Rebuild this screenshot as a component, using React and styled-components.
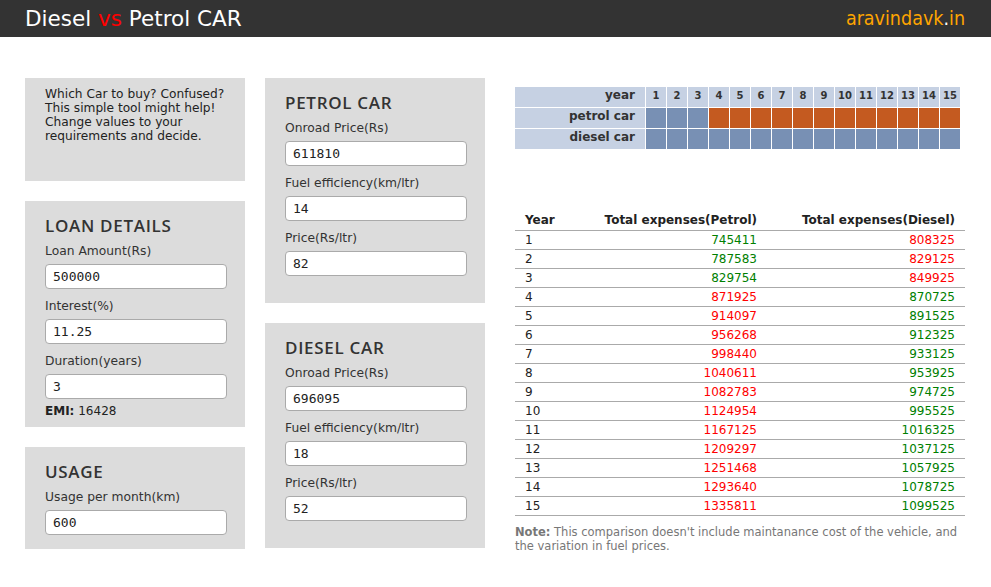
import React from "react";
import styled, { createGlobalStyle } from "styled-components";

const GlobalStyle = createGlobalStyle`
  body {
    margin: 0;
    background: #fff;
    font-family: "DejaVu Sans", Verdana, sans-serif;
    color: #333;
  }
  * {
    box-sizing: border-box;
  }
`;

const petrolTotals = [745411, 787583, 829754, 871925, 914097, 956268, 998440, 1040611, 1082783, 1124954, 1167125, 1209297, 1251468, 1293640, 1335811];
const dieselTotals = [808325, 829125, 849925, 870725, 891525, 912325, 933125, 953925, 974725, 995525, 1016325, 1037125, 1057925, 1078725, 1099525];

const years = petrolTotals.map((_, i) => i + 1);

const App = () => {
  return (
    <React.Fragment>
      <GlobalStyle />
      <Header>
        <Title>
          Diesel <Vs>vs</Vs> Petrol CAR
        </Title>
        <Site>
          aravindavk<Dot>.</Dot>in
        </Site>
      </Header>
      <Main>
        <Column>
          <Box height={103} intro>
            <Intro>
              Which Car to buy? Confused?
              <br />
              This simple tool might help!
              <br />
              Change values to your
              <br />
              requirements and decide.
            </Intro>
          </Box>
          <Box height={226}>
            <Heading>LOAN DETAILS</Heading>
            <Label>Loan Amount(Rs)</Label>
            <Input defaultValue="500000" />
            <Label>Interest(%)</Label>
            <Input defaultValue="11.25" />
            <Label>Duration(years)</Label>
            <Input defaultValue="3" />
            <Emi>
              <b>EMI:</b> 16428
            </Emi>
          </Box>
          <Box height={102}>
            <Heading>USAGE</Heading>
            <Label>Usage per month(km)</Label>
            <Input defaultValue="600" />
          </Box>
        </Column>
        <Column>
          <Box height={225}>
            <Heading>PETROL CAR</Heading>
            <Label>Onroad Price(Rs)</Label>
            <Input defaultValue="611810" />
            <Label>Fuel efficiency(km/ltr)</Label>
            <Input defaultValue="14" />
            <Label>Price(Rs/ltr)</Label>
            <Input defaultValue="82" />
          </Box>
          <Box height={225}>
            <Heading>DIESEL CAR</Heading>
            <Label>Onroad Price(Rs)</Label>
            <Input defaultValue="696095" />
            <Label>Fuel efficiency(km/ltr)</Label>
            <Input defaultValue="18" />
            <Label>Price(Rs/ltr)</Label>
            <Input defaultValue="52" />
          </Box>
        </Column>
        <Results>
          <Strip>
            <StripLabel>year</StripLabel>
            {years.map((y) => (
              <StripYear key={"y" + y}>{y}</StripYear>
            ))}
            <StripLabel>petrol car</StripLabel>
            {years.map((y) => (
              <StripCell key={"p" + y} hot={petrolTotals[y - 1] > dieselTotals[y - 1]} />
            ))}
            <StripLabel>diesel car</StripLabel>
            {years.map((y) => (
              <StripCell key={"d" + y} />
            ))}
          </Strip>
          <Expenses>
            <colgroup>
              <col width="70" />
              <col width="182" />
              <col width="198" />
            </colgroup>
            <thead>
              <tr>
                <Th>Year</Th>
                <Th right>Total expenses(Petrol)</Th>
                <Th right>Total expenses(Diesel)</Th>
              </tr>
            </thead>
            <tbody>
              {years.map((y) => {
                const p = petrolTotals[y - 1];
                const d = dieselTotals[y - 1];
                return (
                  <tr key={y}>
                    <Td>{y}</Td>
                    <Td right cheaper={p < d}>{p}</Td>
                    <Td right cheaper={d < p}>{d}</Td>
                  </tr>
                );
              })}
            </tbody>
          </Expenses>
          <Note>
            <b>Note:</b> This comparison doesn't include maintanance cost of the vehicle, and the variation in fuel prices.
          </Note>
        </Results>
      </Main>
    </React.Fragment>
  );
};

const Header = styled.header`
  height: 37px;
  background-color: #333;
  display: flex;
  align-items: center;
  justify-content: space-between;
  padding: 0 26px 0 25px;
`;

const Title = styled.h1`
  margin: 0;
  font-weight: normal;
  font-size: 21.5px;
  color: #fff;
  line-height: 30px;
`;

const Vs = styled.span`
  color: #f00;
`;

const Site = styled.div`
  font-size: 19.5px;
  font-stretch: condensed;
  font-family: "DejaVu Sans Condensed", "DejaVu Sans", sans-serif;
  color: #ffa500;
  line-height: 28px;
`;

const Dot = styled.span`
  color: #fff;
`;

const Main = styled.main`
  display: flex;
  gap: 20px;
  padding: 41px 25px 0;
`;

const Column = styled.div`
  width: 220px;
  display: flex;
  flex-direction: column;
  gap: 20px;
`;

const Box = styled.section`
  height: ${(p) => p.height}px;
  background-color: #dcdcdc;
  padding: ${(p) => (p.intro ? "9px 20px" : "15px 20px")};
`;

const Intro = styled.p`
  margin: 0;
  font-size: 12.2px;
  line-height: 14px;
  color: #222;
`;

const Heading = styled.h2`
  margin: 0 0 7px;
  font-family: "Open Sans", sans-serif;
  font-weight: 600;
  font-size: 17px;
  letter-spacing: 0.7px;
  line-height: 20px;
  color: #333;
`;

const Label = styled.label`
  display: block;
  font-size: 12.3px;
  line-height: 16px;
  margin-bottom: 5px;
  color: #333;
`;

const Input = styled.input`
  display: block;
  width: 182px;
  height: 25px;
  margin: 0 0 9px;
  padding: 0 7px;
  border: 1px solid #aaa;
  border-radius: 4px;
  background: #fff;
  font-family: "DejaVu Sans Mono", monospace;
  font-size: 13px;
  color: #222;
  outline: none;
`;

const Emi = styled.div`
  margin-top: -5px;
  font-size: 12px;
  line-height: 16px;
  color: #222;
`;

const Results = styled.div`
  width: 450px;
  margin-left: 10px;
  padding-top: 9px;
`;

const Strip = styled.div`
  display: grid;
  grid-template-columns: 130px repeat(15, 20px);
  grid-auto-rows: 20px;
  gap: 1px;
`;

const StripLabel = styled.div`
  background-color: #c6d1e3;
  text-align: right;
  padding-right: 10px;
  font-weight: bold;
  font-size: 12px;
  line-height: 16px;
  color: #333;
`;

const StripYear = styled.div`
  background-color: #c6d1e3;
  text-align: center;
  font-weight: bold;
  font-size: 10px;
  line-height: 18px;
  color: #333;
`;

const StripCell = styled.div`
  background-color: ${(p) => (p.hot ? "#c45a20" : "#7890b4")};
`;

const Expenses = styled.table`
  margin-top: 61px;
  width: 450px;
  table-layout: fixed;
  border-collapse: collapse;
  font-size: 12px;
  color: #222;
`;

const Th = styled.th`
  text-align: ${(p) => (p.right ? "right" : "left")};
  padding: 0 10px;
  height: 20px;
  line-height: 16px;
  white-space: nowrap;
  font-weight: bold;
  border-bottom: 1px solid #aaa;
  color: #222;
`;

const Td = styled.td`
  text-align: ${(p) => (p.right ? "right" : "left")};
  padding: 0 10px;
  height: 19px;
  line-height: 18px;
  border-bottom: 1px solid #aaa;
  color: ${(p) => (!p.right ? "#222" : p.cheaper ? "#008000" : "#f00")};
`;

const Note = styled.p`
  margin: 9px 0 0;
  font-size: 11.5px;
  line-height: 14px;
  color: #777;
`;

export default App;
